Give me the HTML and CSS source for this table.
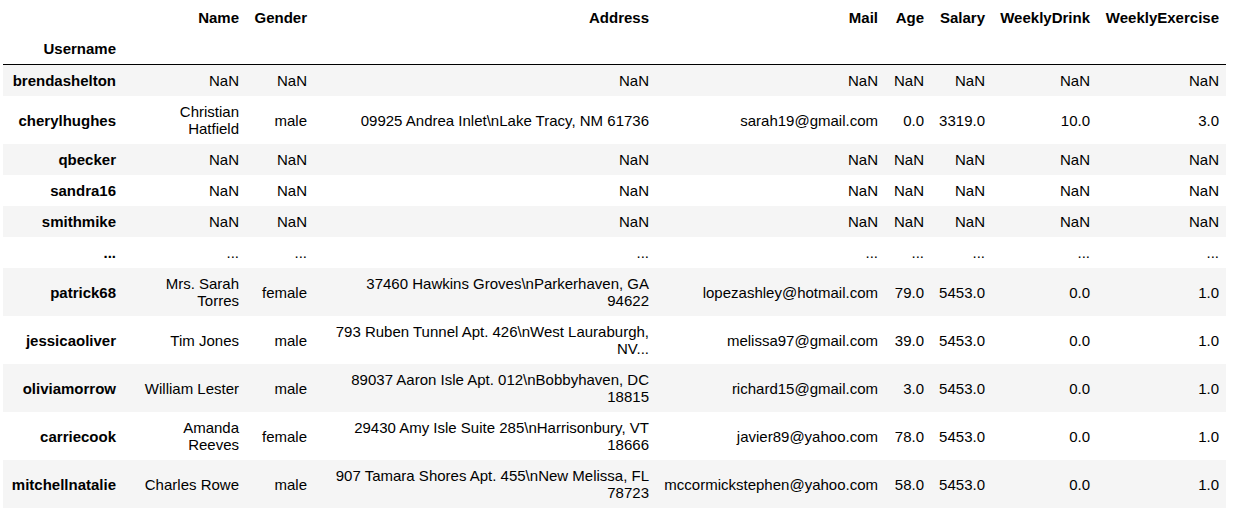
FILE: index.html
```html
<!DOCTYPE html>
<html>
<head>
<meta charset="utf-8">
<link rel="stylesheet" href="styles.css">
</head>
<body>
<div class="output">
<table class="dataframe">
  <colgroup>
    <col class="c-user"><col class="c-name"><col class="c-gender"><col class="c-addr"><col class="c-mail"><col class="c-age"><col class="c-salary"><col class="c-drink"><col class="c-ex">
  </colgroup>
  <thead>
    <tr>
      <th></th><th>Name</th><th>Gender</th><th>Address</th><th>Mail</th><th>Age</th><th>Salary</th><th>WeeklyDrink</th><th>WeeklyExercise</th>
    </tr>
    <tr class="last-head">
      <th>Username</th><th></th><th></th><th></th><th></th><th></th><th></th><th></th><th></th>
    </tr>
  </thead>
  <tbody>
    <tr><th>brendashelton</th><td>NaN</td><td>NaN</td><td class="addr">NaN</td><td>NaN</td><td>NaN</td><td>NaN</td><td>NaN</td><td>NaN</td></tr>
    <tr><th>cherylhughes</th><td>Christian Hatfield</td><td>male</td><td class="addr">09925 Andrea Inlet\nLake Tracy, NM 61736</td><td>sarah19@gmail.com</td><td>0.0</td><td>3319.0</td><td>10.0</td><td>3.0</td></tr>
    <tr><th>qbecker</th><td>NaN</td><td>NaN</td><td class="addr">NaN</td><td>NaN</td><td>NaN</td><td>NaN</td><td>NaN</td><td>NaN</td></tr>
    <tr><th>sandra16</th><td>NaN</td><td>NaN</td><td class="addr">NaN</td><td>NaN</td><td>NaN</td><td>NaN</td><td>NaN</td><td>NaN</td></tr>
    <tr><th>smithmike</th><td>NaN</td><td>NaN</td><td class="addr">NaN</td><td>NaN</td><td>NaN</td><td>NaN</td><td>NaN</td><td>NaN</td></tr>
    <tr><th>...</th><td>...</td><td>...</td><td class="addr">...</td><td>...</td><td>...</td><td>...</td><td>...</td><td>...</td></tr>
    <tr><th>patrick68</th><td>Mrs. Sarah Torres</td><td>female</td><td class="addr">37460 Hawkins Groves\nParkerhaven, GA 94622</td><td>lopezashley@hotmail.com</td><td>79.0</td><td>5453.0</td><td>0.0</td><td>1.0</td></tr>
    <tr><th>jessicaoliver</th><td>Tim Jones</td><td>male</td><td class="addr">793 Ruben Tunnel Apt. 426\nWest Lauraburgh, NV...</td><td>melissa97@gmail.com</td><td>39.0</td><td>5453.0</td><td>0.0</td><td>1.0</td></tr>
    <tr><th>oliviamorrow</th><td>William Lester</td><td>male</td><td class="addr">89037 Aaron Isle Apt. 012\nBobbyhaven, DC 18815</td><td>richard15@gmail.com</td><td>3.0</td><td>5453.0</td><td>0.0</td><td>1.0</td></tr>
    <tr><th>carriecook</th><td>Amanda Reeves</td><td>female</td><td class="addr">29430 Amy Isle Suite 285\nHarrisonbury, VT 18666</td><td>javier89@yahoo.com</td><td>78.0</td><td>5453.0</td><td>0.0</td><td>1.0</td></tr>
    <tr><th>mitchellnatalie</th><td>Charles Rowe</td><td>male</td><td class="addr">907 Tamara Shores Apt. 455\nNew Melissa, FL 78723</td><td>mccormickstephen@yahoo.com</td><td>58.0</td><td>5453.0</td><td>0.0</td><td>1.0</td></tr>
  </tbody>
</table>
</div>
</body>
</html>
```
FILE: styles.css
```css
html, body {
  margin: 0;
  padding: 0;
  background: #ffffff;
}

.output {
  padding: 2px 10px 4px 3px;
}

.dataframe {
  table-layout: fixed;
  width: 1223px;
  border-collapse: collapse;
  border-spacing: 0;
  font-family: "Liberation Sans", Arial, sans-serif;
  font-size: 15px;
  line-height: 17px;
  color: #000000;
}

.c-user { width: 120px; }
.c-name { width: 123px; }
.c-gender { width: 68px; }
.c-addr { width: 342px; }
.c-mail { width: 229px; }
.c-age { width: 46px; }
.c-salary { width: 61px; }
.c-drink { width: 105px; }
.c-ex { width: 129px; }

.dataframe th,
.dataframe td {
  text-align: right;
  vertical-align: middle;
  padding: 7px;
  border: none;
  white-space: normal;
}

.dataframe th {
  font-weight: bold;
}

.dataframe thead .last-head th {
  border-bottom: 1px solid #000000;
  padding-bottom: 7px;
}

.dataframe tbody tr:nth-child(odd) {
  background: #f5f5f5;
}

.dataframe td.addr {
  padding-left: 16px;
}
```
